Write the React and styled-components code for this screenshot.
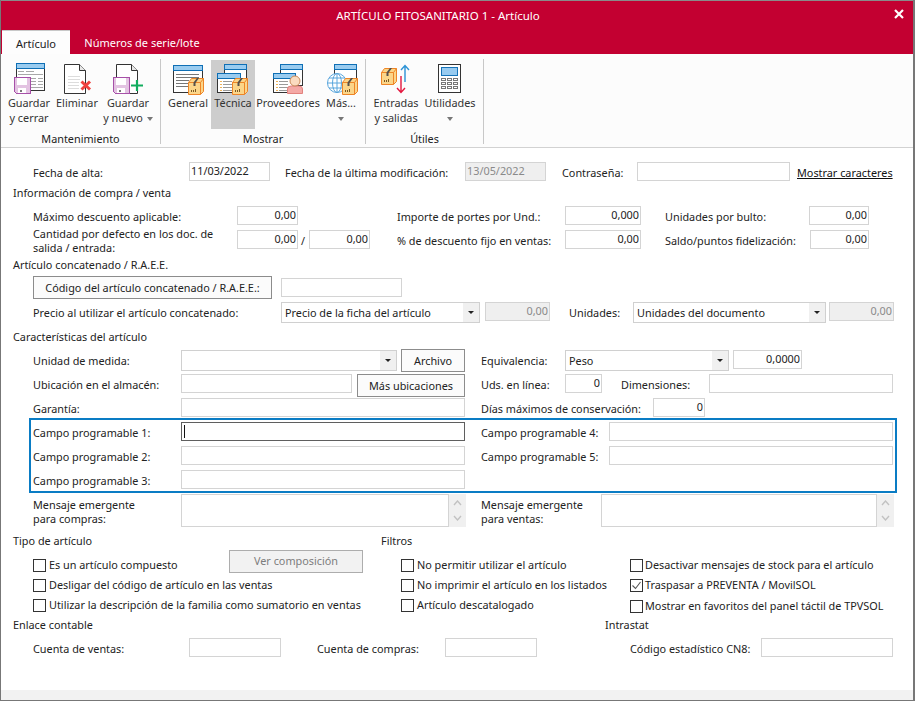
import React from "react";
import styled, { createGlobalStyle } from "styled-components";

const Global = createGlobalStyle`
  html, body { margin: 0; padding: 0; background: #fff; overflow: hidden; }
  * { box-sizing: border-box; }
`;

const FONT = `"Noto Sans", "Open Sans", "Liberation Sans", sans-serif`;
const SIZE = "10.85px";

const Page = styled.div`
  width: 915px; height: 701px; display: flex; flex-direction: column;
  border-left: 1px solid #777; border-right: 2px solid #777; border-bottom: 1px solid #777;
  font-family: ${FONT}; font-size: ${SIZE}; color: #222; background: #fff;
`;
const Header = styled.header`
  height: 54px; background: #c30031; border-top: 1px solid #8a8a8a; display: flex; flex-direction: column; flex: none;
`;
const TitleRow = styled.div` height: 29px; display: flex; `;
const Title = styled.div`
  flex: 1; text-align: center; color: #fff; font-size: 11.5px; line-height: 30px;
`;
const Close = styled.div` width: 38px; padding: 6px 0 0 19px; `;
const Tabs = styled.nav` height: 24px; display: flex; padding-left: 1px; `;
const Tab = styled.div`
  width: ${p => p.$w}px; height: 24px; line-height: 25px; text-align: center; font-size: 11px;
  color: ${p => (p.$active ? "#222" : "#fff")};
  background: ${p => (p.$active ? "#fdfdfd" : "transparent")};
  border-top: ${p => (p.$active ? "1px solid #c8c8c8" : "none")};
`;
const Ribbon = styled.section`
  height: 94px; flex: none; display: flex; background: #fcfcfc; border-bottom: 1px solid #d2d2d2;
`;
const Group = styled.div`
  width: ${p => p.$w}px; height: 85px; margin-top: 5px; padding-top: 1px; padding-left: 0;
  border-right: 1px solid #c8c8c8; display: flex; flex-direction: column;
`;
const GroupButtons = styled.div` height: 69px; display: flex; padding-left: ${p => p.$pl}px; `;
const GroupLabel = styled.div` height: 15px; line-height: 20px; text-align: center; `;
const RibbonBtn = styled.div`
  width: ${p => p.$w}px; height: 69px; padding-top: 2px; flex: none;
  display: flex; flex-direction: column; align-items: center; color: #333;
  background: ${p => (p.$active ? "#cdcdcd" : "transparent")};
  svg.ic { flex: none; display: block; margin-bottom: -1px; }
`;
const BtnLine = styled.div` line-height: 15px; height: 15px; white-space: nowrap; display: flex; align-items: center; `;
const Tri = styled.span`
  display: inline-block; width: 0; height: 0; margin: ${p => p.$m || "2px 0 0 4px"};
  border-left: 3.5px solid transparent; border-right: 3.5px solid transparent; border-top: 4px solid #777;
`;

const Form = styled.main` flex: 1; display: flex; flex-direction: column; padding-top: 14px; background: #fff; min-height: 0; `;
const Foot = styled.footer` height: 10px; flex: none; background: #f2f2f2; `;
const Section = styled.h3`
  margin: 0; font-weight: 400; font-size: ${SIZE}; line-height: 15px; height: ${p => p.$h || 17}px;
  padding-left: ${p => p.$pl ?? 12}px; width: ${p => (p.$w ? p.$w + "px" : "auto")}; flex: none;
`;
const SectionRow = styled.div` display: flex; `;
const Row = styled.div`
  display: flex; align-items: flex-start; height: ${p => p.$h}px; padding-left: ${p => p.$pl ?? 32}px; flex: none;
  margin-top: ${p => p.$mt || 0}px;
`;
const Label = styled.label`
  width: ${p => p.$w}px; flex: none; line-height: 19px; padding-top: 1px; white-space: nowrap;
`;
const TwoLine = styled.label`
  width: ${p => p.$w}px; flex: none; line-height: 13.5px; margin-top: ${p => p.$mt}px; white-space: nowrap;
`;
const Field = styled.input`
  width: ${p => p.$w}px; height: 19px; flex: none; border: 1px solid #d4d4d4; background: ${p => (p.$off ? "#efefef" : "#fff")};
  color: ${p => (p.$off ? "#8a8a8a" : "#222")}; font: ${SIZE} ${FONT}; outline: none;
  padding: 0 1px 3px 1px; text-align: ${p => (p.$right ? "right" : "left")};
  margin-right: ${p => p.$mr || 0}px; margin-top: ${p => p.$mt || 0}px; border-radius: 0;
`;
const Focused = styled.div`
  width: ${p => p.$w}px; height: 19px; flex: none; border: 1px solid #5f5f5f; margin-right: ${p => p.$mr || 0}px;
  padding: 2px 0 0 2px; background: #fff;
`;
const Caret = styled.span` display: block; width: 1px; height: 13px; background: #111; `;
const Combo = styled.div`
  width: ${p => p.$w}px; height: 21px; flex: none; border: 1px solid #d0d0d0; display: flex; background: #fff;
  margin-right: ${p => p.$mr || 0}px;
`;
const ComboText = styled.div` flex: 1; padding-left: 3px; line-height: 20px; white-space: nowrap; overflow: hidden; `;
const ComboArrow = styled.div`
  width: 16px; background: #f0f0f0; display: flex; align-items: center; justify-content: center;
  &::after { content: ""; width: 0; height: 0; border-left: 3px solid transparent; border-right: 3px solid transparent; border-top: 3px solid #222; }
`;
const Button = styled.div`
  width: ${p => p.$w}px; height: 23px; flex: none; border: 1px solid ${p => (p.$off ? "#adadad" : "#8c8c8c")};
  background: ${p => (p.$off ? "#f2f2f2" : "#fbfbfb")}; color: ${p => (p.$off ? "#7d7d7d" : "#222")};
  text-align: center; line-height: ${p => (p.$off ? 20 : 21)}px; white-space: nowrap;
  margin-right: ${p => p.$mr || 0}px; margin-top: ${p => p.$mt || 0}px;
`;
const Slash = styled.span` width: 11px; flex: none; padding-left: 3px; line-height: 19px; padding-top: 1px; `;
const LinkText = styled.a` color: #111; text-decoration: underline; line-height: 19px; padding-top: 1px; white-space: nowrap; `;
const BlueBox = styled.div`
  width: 868px; height: 75px; margin-left: 28px; flex: none; border: 2px solid #0a7cc4; padding-top: 2px; 
`;
const Memo = styled.div` width: ${p => p.$w}px; height: 33px; flex: none; border: 1px solid #d4d4d4; background: #fff; `;
const Scroll = styled.div`
  width: 17px; height: 33px; flex: none; background: #f0f0f0; margin-right: ${p => p.$mr || 0}px;
  display: flex; flex-direction: column; justify-content: space-between; align-items: center; padding: 6px 0;
`;
const Lower = styled.div` display: flex; height: 84px; flex: none; `;
const Col = styled.div` width: ${p => p.$w}px; flex: none; `;
const CheckRow = styled.div` display: flex; align-items: flex-start; height: ${p => p.$h}px; padding-left: ${p => p.$pl || 0}px; `;
const CheckItem = styled.label`
  display: flex; align-items: center; height: 13px; flex: none; white-space: nowrap;
  margin-top: ${p => p.$mt}px; width: ${p => (p.$w ? p.$w + "px" : "auto")};
`;
const CheckText = styled.span` margin-top: -2px; `;
const Box = styled.span`
  width: 13px; height: 13px; border: 1px solid #333; background: #fff; flex: none; margin-right: ${p => p.$gap ?? 3}px;
  display: flex; align-items: center; justify-content: center;
`;

const Chev = ({ up }) => (
  <svg width="9" height="6" viewBox="0 0 9 6">
    <path d={up ? "M1 5 L4.5 1 L8 5" : "M1 1 L4.5 5 L8 1"} fill="none" stroke="#c2c2c2" strokeWidth="1.4" />
  </svg>
);

const Win = ({ x, y, w, h, lines }) => (
  <g shapeRendering="crispEdges">
    <rect x={x + 0.5} y={y + 0.5} width={w - 1} height={h - 1} fill="#fff" stroke="#333" />
    <rect x={x + 0.5} y={y + 0.5} width={w - 1} height="5" fill="#9accf0" stroke="#0f6fb5" />
    {lines}
  </g>
);
const Floppy = ({ x, y }) => (
  <g transform={`translate(${x} ${y})`} shapeRendering="crispEdges">
    <path d="M0.5 0.5 H16.5 V16.5 H2.5 L0.5 14.5 Z" fill="#e3c3e2" stroke="#a650a8" />
    <rect x="3" y="1" width="10" height="7" fill="#fff" />
    <rect x="4" y="11" width="8" height="5" fill="#fff" />
    <rect x="6" y="13" width="2" height="2" fill="#777" />
  </g>
);
const Crate = ({ x, y }) => (
  <g transform={`translate(${x} ${y})`}>
    <path d="M0.5 4.5 L3.5 0.5 H15.5 V13.5 L12.5 16.5 H0.5 Z" fill="#fbd589" stroke="#ee8527" />
    <path d="M0.5 4.5 H12.5 L15.5 0.5 M12.5 4.5 V16.5" fill="none" stroke="#ee8527" />
    <path d="M5.5 4.5 L9 0 H11 L7.5 5 V8 H5.5 Z" fill="#55504a" />
    <rect x="3" y="12" width="1" height="2" fill="#7a5a22" />
    <rect x="5" y="12" width="1" height="2" fill="#7a5a22" />
    <rect x="7" y="11" width="1" height="3" fill="#7a5a22" />
  </g>
);
const Doc = ({ x, y }) => (
  <g transform={`translate(${x} ${y})`}>
    <path d="M0.5 0.5 H15.5 L21.5 6.5 V29.5 H0.5 Z" fill="#fff" stroke="#333" />
    <path d="M15.5 0.5 V6.5 H21.5" fill="#e8e8e8" stroke="#333" />
  </g>
);
const ListLines = ({ x, y, n = 3 }) => (
  <g shapeRendering="crispEdges">
    {Array.from({ length: n }).map((_, i) => (
      <g key={i}>
        <rect x={x} y={y + i * 3} width="2" height="1" fill="#ecb25a" />
        <rect x={x + 3} y={y + i * 3} width="9" height="1" fill="#9a9a9a" />
      </g>
    ))}
  </g>
);
const S = ({ children }) => (
  <svg className="ic" width="44" height="34" viewBox="0 0 44 34">{children}</svg>
);

const IconSave = () => (
  <S>
    <Win x={9} y={1} w={29} h={28} lines={
      <g fill="#a8a8a8">
        <rect x="11" y="9" width="6" height="1" /><rect x="19" y="9" width="8" height="1" />
        <rect x="11" y="12" width="25" height="1" />
        <rect x="24" y="16" width="5" height="1" /><rect x="31" y="16" width="5" height="1" />
        <rect x="24" y="19" width="5" height="1" /><rect x="31" y="19" width="5" height="1" />
        <rect x="24" y="22" width="5" height="1" /><rect x="31" y="22" width="5" height="1" />
        <rect x="24" y="25" width="12" height="1" />
      </g>} />
    <Floppy x={7} y={15} />
  </S>
);
const IconDelete = () => (
  <S>
    <Doc x={9} y={2} />
    <g fill="#dcdcdc" shapeRendering="crispEdges">
      <rect x="13" y="14" width="12" height="1" /><rect x="13" y="17" width="12" height="1" />
      <rect x="13" y="20" width="11" height="1" /><rect x="13" y="23" width="11" height="1" />
      <rect x="13" y="26" width="11" height="1" />
    </g>
    <path d="M26.5 19.5 L35 27.5 M35 19.5 L26.5 27.5" stroke="#f0423f" strokeWidth="3" fill="none" />
  </S>
);
const IconNew = () => (
  <S>
    <Doc x={10} y={2} />
    <Floppy x={7} y={15} />
    <path d="M31 18 V29 M25 23.5 H37" stroke="#12ad5e" strokeWidth="2.2" fill="none" />
  </S>
);
const IconGeneral = () => (
  <S>
    <Win x={7} y={3} w={30} h={28} lines={
      <g fill="#777">
        <rect x="10" y="12" width="23" height="1" /><rect x="10" y="15" width="23" height="1" />
        <rect x="10" y="18" width="13" height="1" /><rect x="10" y="21" width="13" height="1" />
        <rect x="10" y="24" width="13" height="1" />
      </g>} />
    <Crate x={22} y={16} />
  </S>
);
const IconTech = () => (
  <S>
    <Win x={13} y={2} w={23} h={22} />
    <Win x={6} y={11} w={24} h={20} lines={<ListLines x={9} y={19} n={4} />} />
    <Crate x={21} y={16} />
  </S>
);
const IconProv = () => (
  <S>
    <Win x={14} y={2} w={23} h={22} />
    <Win x={7} y={11} w={23} h={20} lines={<ListLines x={10} y={19} n={4} />} />
    <path d="M21.5 31.5 V27 Q21.5 24 25 24 H33 Q36.5 24 36.5 27 V31.5 Z" fill="#f4a9a6" stroke="#e2827e" />
    <circle cx="29" cy="19" r="5" fill="#fbdcc0" stroke="#c98a5a" />
  </S>
);
const IconMore = () => (
  <S>
    <Win x={15} y={2} w={23} h={22} />
    <g fill="#fff" stroke="#5aa6dc" strokeWidth="1">
      <circle cx="18" cy="21" r="9.5" />
      <ellipse cx="18" cy="21" rx="4.5" ry="9.5" fill="none" />
      <path d="M18 11.5 V30.5 M8.5 21 H27.5 M10 16 H26 M10 26 H26" fill="none" />
    </g>
    <Crate x={23} y={16} />
  </S>
);
const IconIO = () => (
  <S>
    <Crate x={7} y={6} />
    <path d="M31 20 V4 M27 8 L31 3.5 L35 8" fill="none" stroke="#2d93d6" strokeWidth="1.4" />
    <path d="M27 14 V30 M23 26 L27 30.5 L31 26" fill="none" stroke="#e4173f" strokeWidth="1.4" />
  </S>
);
const IconCalc = () => (
  <S>
    <rect x="10.5" y="2.5" width="22" height="28" fill="#fff" stroke="#333" />
    <rect x="13.5" y="5.5" width="16" height="8" fill="#98cbf0" stroke="#1673b8" shapeRendering="crispEdges" />
    <g fill="none" stroke="#777" shapeRendering="crispEdges">
      {[16, 20, 24].map(y => [13, 19, 25].map(x => (
        <rect key={`${x}-${y}`} x={x + 0.5} y={y + 0.5} width="4" height="2" />
      )))}
    </g>
  </S>
);

const Check = ({ children, mt, w, gap, on }) => (
  <CheckItem $mt={mt} $w={w}>
    <Box $gap={gap}>
      {on && (
        <svg width="11" height="11" viewBox="0 0 11 11">
          <path d="M1.5 5.5 L4.5 8.5 L9.5 2" fill="none" stroke="#555" strokeWidth="1.1" />
        </svg>
      )}
    </Box>
    <CheckText>{children}</CheckText>
  </CheckItem>
);

export default function App() {
  return (
    <Page>
      <Global />
      <Header>
        <TitleRow>
          <Title>ARTÍCULO FITOSANITARIO 1 - Artículo</Title>
          <Close>
            <svg width="10" height="10" viewBox="0 0 10 10">
              <path d="M1 1 L9 9 M9 1 L1 9" stroke="#fff" strokeWidth="2.2" />
            </svg>
          </Close>
        </TitleRow>
        <Tabs>
          <Tab $active $w={68}>Artículo</Tab>
          <Tab $w={144}>Números de serie/lote</Tab>
        </Tabs>
      </Header>

      <Ribbon>
        <Group $w={160}>
          <GroupButtons $pl={6}>
            <RibbonBtn $w={44}><IconSave /><BtnLine>Guardar</BtnLine><BtnLine>y cerrar</BtnLine></RibbonBtn>
            <RibbonBtn $w={52}><IconDelete /><BtnLine>Eliminar</BtnLine></RibbonBtn>
            <RibbonBtn $w={50}><IconNew /><BtnLine>Guardar</BtnLine><BtnLine>y nuevo<Tri /></BtnLine></RibbonBtn>
          </GroupButtons>
          <GroupLabel>Mantenimiento</GroupLabel>
        </Group>
        <Group $w={205}>
          <GroupButtons $pl={4}>
            <RibbonBtn $w={46}><IconGeneral /><BtnLine>General</BtnLine></RibbonBtn>
            <RibbonBtn $w={44} $active><IconTech /><BtnLine>Técnica</BtnLine></RibbonBtn>
            <RibbonBtn $w={66}><IconProv /><BtnLine>Proveedores</BtnLine></RibbonBtn>
            <RibbonBtn $w={40}><IconMore /><BtnLine>Más...</BtnLine><BtnLine><Tri $m="2px 0 0 0" /></BtnLine></RibbonBtn>
          </GroupButtons>
          <GroupLabel>Mostrar</GroupLabel>
        </Group>
        <Group $w={118}>
          <GroupButtons $pl={5}>
            <RibbonBtn $w={50}><IconIO /><BtnLine>Entradas</BtnLine><BtnLine>y salidas</BtnLine></RibbonBtn>
            <RibbonBtn $w={58}><IconCalc /><BtnLine>Utilidades</BtnLine><BtnLine><Tri $m="2px 0 0 0" /></BtnLine></RibbonBtn>
          </GroupButtons>
          <GroupLabel>Útiles</GroupLabel>
        </Group>
      </Ribbon>

      <Form>
        <Row $h={23}>
          <Label $w={156}>Fecha de alta:</Label>
          <Field $w={81} $mr={15} defaultValue="11/03/2022" />
          <Label $w={180}>Fecha de la última modificación:</Label>
          <Field $w={81} $mr={16} $off readOnly defaultValue="13/05/2022" />
          <Label $w={75}>Contraseña:</Label>
          <Field $w={153} $mr={7} />
          <LinkText>Mostrar caracteres</LinkText>
        </Row>
        <Section $h={21}>Información de compra / venta</Section>
        <Row $h={24}>
          <Label $w={204}>Máximo descuento aplicable:</Label>
          <Field $w={61} $mr={99} $right defaultValue="0,00" />
          <Label $w={168}>Importe de portes por Und.:</Label>
          <Field $w={76} $mr={24} $right defaultValue="0,000" />
          <Label $w={144}>Unidades por bulto:</Label>
          <Field $w={60} $right defaultValue="0,00" />
        </Row>
        <Row $h={27}>
          <TwoLine $w={204} $mt={-3}>Cantidad por defecto en los doc. de<br />salida / entrada:</TwoLine>
          <Field $w={61} $right defaultValue="0,00" />
          <Slash>/</Slash>
          <Field $w={61} $mr={27} $right defaultValue="0,00" />
          <Label $w={168}>% de descuento fijo en ventas:</Label>
          <Field $w={76} $mr={24} $right defaultValue="0,00" />
          <Label $w={145}>Saldo/puntos fidelización:</Label>
          <Field $w={59} $right defaultValue="0,00" />
        </Row>
        <Section $h={19}>Artículo concatenado / R.A.E.E.</Section>
        <Row $h={26}>
          <Button $w={239} $mr={9}>Código del artículo concatenado / R.A.E.E.:</Button>
          <Field $w={121} $mt={2} />
        </Row>
        <Row $h={27}>
          <Label $w={248}>Precio al utilizar el artículo concatenado:</Label>
          <Combo $w={199} $mr={5}><ComboText>Precio de la ficha del artículo</ComboText><ComboArrow /></Combo>
          <Field $w={65} $mr={19} $off $right readOnly defaultValue="0,00" />
          <Label $w={64}>Unidades:</Label>
          <Combo $w={193} $mr={3}><ComboText>Unidades del documento</ComboText><ComboArrow /></Combo>
          <Field $w={65} $off $right readOnly defaultValue="0,00" />
        </Row>
        <Section $h={21}>Características del artículo</Section>
        <Row $h={24}>
          <Label $w={148}>Unidad de medida:</Label>
          <Combo $w={216} $mr={4}><ComboText /><ComboArrow /></Combo>
          <Button $w={64} $mr={16} $mt={-1}>Archivo</Button>
          <Label $w={84}>Equivalencia:</Label>
          <Combo $w={164} $mr={4}><ComboText>Peso</ComboText><ComboArrow /></Combo>
          <Field $w={69} $right defaultValue="0,0000" />
        </Row>
        <Row $h={24}>
          <Label $w={148}>Ubicación en el almacén:</Label>
          <Field $w={171} $mr={5} />
          <Button $w={108} $mr={16}>Más ubicaciones</Button>
          <Label $w={84}>Uds. en línea:</Label>
          <Field $w={37} $mr={19} $right defaultValue="0" />
          <Label $w={88}>Dimensiones:</Label>
          <Field $w={184} />
        </Row>
        <Row $h={20}>
          <Label $w={148}>Garantía:</Label>
          <Field $w={284} $mr={16} />
          <Label $w={172}>Días máximos de conservación:</Label>
          <Field $w={52} $right defaultValue="0" />
        </Row>
        <BlueBox>
          <Row $h={24} $pl={2}>
            <Label $w={148}>Campo programable 1:</Label>
            <Focused $w={284} $mr={16}><Caret /></Focused>
            <Label $w={128}>Campo programable 4:</Label>
            <Field $w={284} />
          </Row>
          <Row $h={24} $pl={2}>
            <Label $w={148}>Campo programable 2:</Label>
            <Field $w={284} $mr={16} />
            <Label $w={128}>Campo programable 5:</Label>
            <Field $w={284} />
          </Row>
          <Row $h={23} $pl={2}>
            <Label $w={148}>Campo programable 3:</Label>
            <Field $w={284} />
          </Row>
        </BlueBox>
        <Row $h={39} $mt={1}>
          <TwoLine $w={148} $mt={4}>Mensaje emergente<br />para compras:</TwoLine>
          <Memo $w={268} />
          <Scroll $mr={15}><Chev up /><Chev /></Scroll>
          <TwoLine $w={120} $mt={4}>Mensaje emergente<br />para ventas:</TwoLine>
          <Memo $w={276} />
          <Scroll><Chev up /><Chev /></Scroll>
        </Row>
        <Lower>
          <Col $w={380}>
            <Section>Tipo de artículo</Section>
            <CheckRow $h={25} $pl={32}>
              <Check mt={9} w={196}>Es un artículo compuesto</Check>
              <Button $w={134} $off>Ver composición</Button>
            </CheckRow>
            <CheckRow $h={20} $pl={32}><Check mt={4}>Desligar del código de artículo en las ventas</Check></CheckRow>
            <CheckRow $h={22} $pl={32}><Check mt={4}>Utilizar la descripción de la familia como sumatorio en ventas</Check></CheckRow>
          </Col>
          <Col $w={249}>
            <Section $pl={0}>Filtros</Section>
            <CheckRow $h={25} $pl={20}><Check mt={9}>No permitir utilizar el artículo</Check></CheckRow>
            <CheckRow $h={20} $pl={20}><Check mt={4}>No imprimir el artículo en los listados</Check></CheckRow>
            <CheckRow $h={22} $pl={20}><Check mt={4}>Artículo descatalogado</Check></CheckRow>
          </Col>
          <Col $w={280}>
            <Section />
            <CheckRow $h={25}><Check mt={9} gap={2}>Desactivar mensajes de stock para el artículo</Check></CheckRow>
            <CheckRow $h={21}><Check mt={4} gap={2} on>Traspasar a PREVENTA / MovilSOL</Check></CheckRow>
            <CheckRow $h={21}><Check mt={4} gap={2}>Mostrar en favoritos del panel táctil de TPVSOL</Check></CheckRow>
          </Col>
        </Lower>
        <SectionRow>
          <Section $h={21} $w={604}>Enlace contable</Section>
          <Section $h={21} $pl={0}>Intrastat</Section>
        </SectionRow>
        <Row $h={20}>
          <Label $w={156}>Cuenta de ventas:</Label>
          <Field $w={92} $mr={36} />
          <Label $w={128}>Cuenta de compras:</Label>
          <Field $w={92} $mr={93} />
          <Label $w={131}>Código estadístico CN8:</Label>
          <Field $w={132} />
        </Row>
      </Form>
      <Foot />
    </Page>
  );
}
